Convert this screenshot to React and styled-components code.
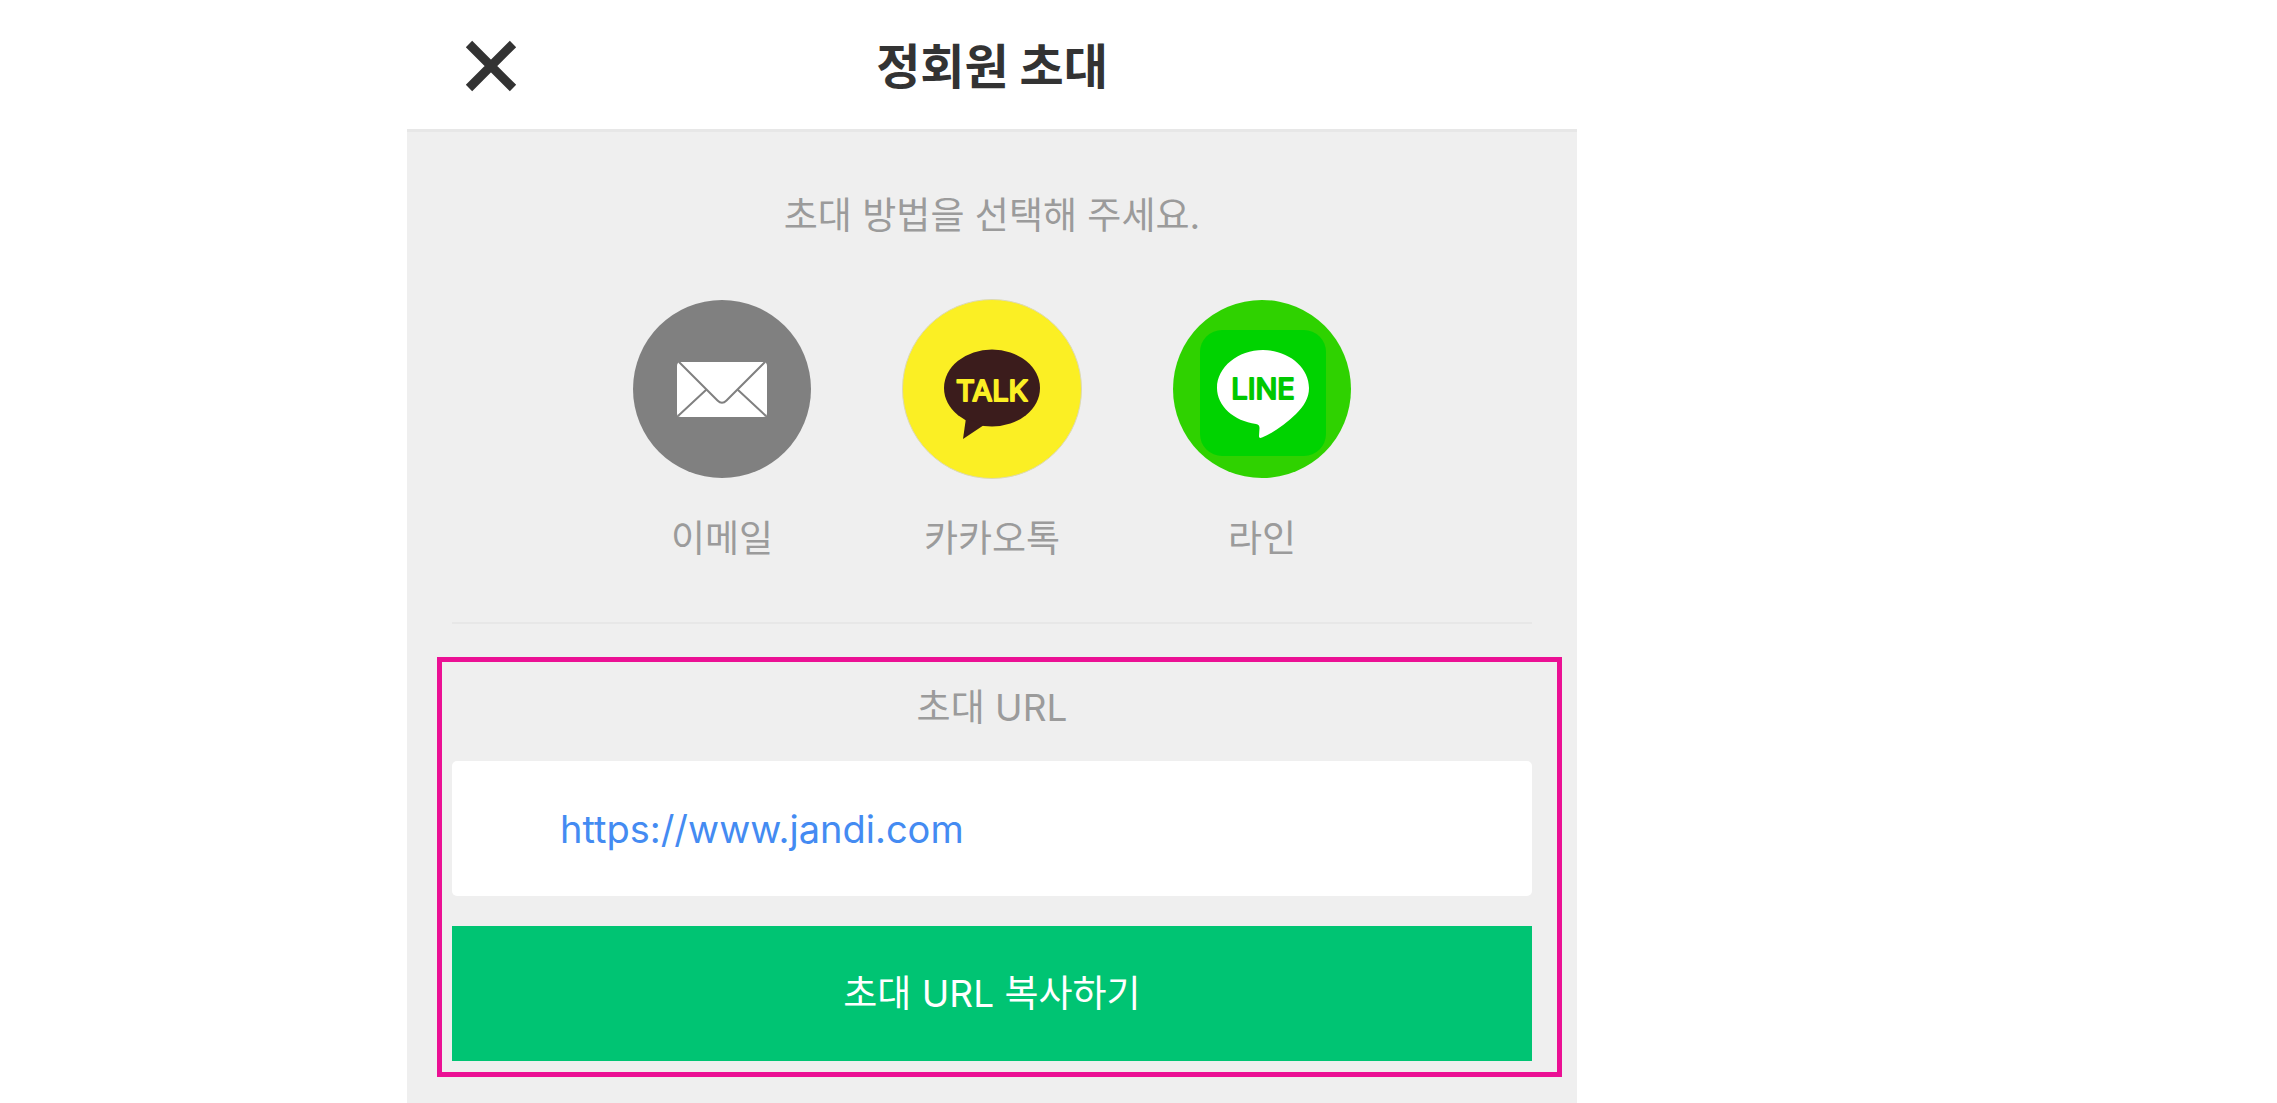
import React from 'react';
import styled, { createGlobalStyle } from 'styled-components';

const GlobalStyles = createGlobalStyle`
  :root {
    --black: #333333;
    --grey: #9b9b9b;
    --lightGrey: #efefef;
    --line: #e7e7e7;
    --blue: #448bf2;
    --green: #00c473;
    --pink: #eb1094;
  }
  *, *::before, *::after {
    box-sizing: border-box;
  }
  body {
    margin: 0;
    background: white;
    color: var(--grey);
    font-family: Inter, 'Noto Sans CJK KR', sans-serif;
    font-size: 37px;
    line-height: 56px;
  }
  button, input {
    font: inherit;
    color: inherit;
    border: 0;
    padding: 0;
    background: none;
  }
  button {
    cursor: pointer;
  }
`;

const PageStyles = styled.div`
  display: grid;
  grid-template-columns: 407fr minmax(0, 1170fr) 700fr;
  min-height: 100vh;
`;

const ScreenStyles = styled.div`
  grid-column: 2;
  display: flex;
  flex-direction: column;
  background: var(--lightGrey);
`;

const HeaderStyles = styled.header`
  display: grid;
  grid-template-columns: 168px 1fr 168px;
  align-items: center;
  height: 132px;
  background: white;
  border-bottom: 3px solid var(--line);
  h1 {
    margin: 0;
    padding-bottom: 3px;
    color: var(--black);
    font-size: 48px;
    font-weight: 700;
    text-align: center;
    font-family: 'Noto Sans CJK KR', sans-serif;
  }
`;

const CloseButton = styled.button`
  justify-self: center;
  display: flex;
  svg {
    width: 50px;
    height: 50px;
    overflow: visible;
  }
`;

const MethodsStyles = styled.section`
  margin: 0 45px;
  padding: 56px 0 55px;
  border-bottom: 2px solid var(--line);
  text-align: center;
  p {
    margin: 0 0 55px;
  }
`;

const MethodList = styled.div`
  display: flex;
  justify-content: center;
  gap: 90px;
`;

const MethodButton = styled.button`
  display: flex;
  flex-direction: column;
  align-items: center;
  gap: 32px;
  width: 180px;
  svg {
    width: 180px;
    height: 180px;
  }
  text {
    font-family: Inter, sans-serif;
    font-size: 29px;
    font-weight: 400;
    text-anchor: middle;
    stroke-width: 2px;
    stroke-linejoin: round;
  }
`;

const LinkStyles = styled.section`
  display: flex;
  flex-direction: column;
  margin: 33px 15px 26px 30px;
  padding: 18px 25px 11px 10px;
  border: 5px solid var(--pink);
  label {
    margin-bottom: 25px;
    text-align: center;
  }
`;

const UrlInput = styled.input`
  width: 100%;
  height: 135px;
  margin-bottom: 30px;
  padding: 0 108px;
  border-radius: 5px;
  background: white;
  color: var(--blue);
  font-size: 38px;
`;

const CopyButton = styled.button`
  height: 135px;
  background: var(--green);
  color: white;
`;

function CloseIcon() {
  return (
    <svg viewBox="0 0 50 50" aria-hidden="true">
      <path d="M3 4L47 48M47 4L3 48" stroke="#333" strokeWidth="9" />
    </svg>
  );
}

function EmailIcon() {
  return (
    <svg viewBox="0 0 180 180" aria-hidden="true">
      <circle cx="90" cy="90" r="89" fill="#808080" />
      <rect x="45" y="63" width="90" height="55" rx="4" fill="#fff" />
      <g fill="none" stroke="#808080" strokeWidth="2">
        <path d="M47 63L85.500 101.500Q90 106 94.500 101.500L133 63" />
        <path d="M74.500 90.500L46 117M105.500 90.500L134 117" />
      </g>
    </svg>
  );
}

function KakaoIcon() {
  return (
    <svg viewBox="0 0 180 180" aria-hidden="true">
      <circle cx="90" cy="90" r="89.500" fill="#fbef24" stroke="#dcd9b4" />
      <ellipse cx="90" cy="89" rx="48" ry="38.500" fill="#3b1c1c" />
      <path d="M64 119L61 140L82 126Z" fill="#3b1c1c" />
      <text x="90" y="102" fill="#fbef24" stroke="#fbef24">
        TALK
      </text>
    </svg>
  );
}

function LineIcon() {
  return (
    <svg viewBox="0 0 180 180" aria-hidden="true">
      <circle cx="90" cy="90" r="89" fill="#2fd200" />
      <rect x="28" y="31" width="126" height="126" rx="22" fill="#00d300" />
      <path
        d="M91 51C116 51 137 68 137 89C137 99 132 107 124 115C114 125 101 134 90 138.500C87.500 139.500 87 138.500 87 137L87.500 129C87.500 126.500 86.500 125.500 84 125C62 122 45 107 45 89C45 68 66 51 91 51Z"
        fill="#fff"
      />
      <text x="91" y="100" fill="#00c800" stroke="#00c800">
        LINE
      </text>
    </svg>
  );
}

const methods = [
  { name: '이메일', Icon: EmailIcon },
  { name: '카카오톡', Icon: KakaoIcon },
  { name: '라인', Icon: LineIcon },
];

export default function App() {
  return (
    <PageStyles>
      <GlobalStyles />
      <ScreenStyles>
        <HeaderStyles>
          <CloseButton type="button" aria-label="닫기">
            <CloseIcon />
          </CloseButton>
          <h1>정회원 초대</h1>
        </HeaderStyles>
        <MethodsStyles>
          <p>초대 방법을 선택해 주세요.</p>
          <MethodList>
            {methods.map(({ name, Icon }) => (
              <MethodButton type="button" key={name}>
                <Icon />
                <span>{name}</span>
              </MethodButton>
            ))}
          </MethodList>
        </MethodsStyles>
        <LinkStyles>
          <label htmlFor="inviteUrl">초대 URL</label>
          <UrlInput
            id="inviteUrl"
            type="text"
            readOnly
            value="https://www.jandi.com"
          />
          <CopyButton type="button">초대 URL 복사하기</CopyButton>
        </LinkStyles>
      </ScreenStyles>
    </PageStyles>
  );
}
